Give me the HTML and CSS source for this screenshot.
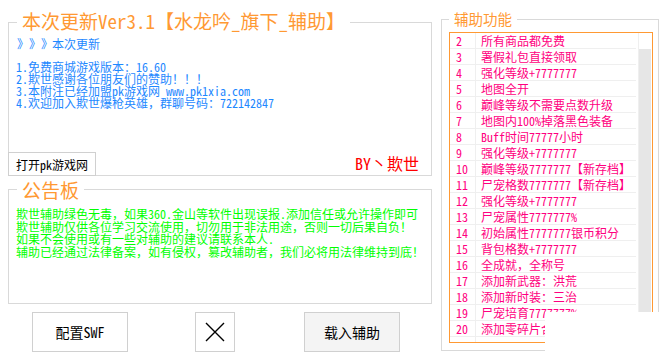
FILE: index.html
```html
<!DOCTYPE html>
<html lang="zh-CN">
<head>
  <meta charset="UTF-8" />
  <title>欺世辅助</title>
  <link rel="stylesheet" href="styles.css">
</head>
<body>
  <div class="window">
    <div class="left-col">
      <div class="group group-update">
        <span class="group-title">本次更新Ver3.1【水龙吟_旗下_辅助】</span>
        <div class="notes">
          <div><span class="chevrons">》》》</span>本次更新</div>
          <div>&nbsp;</div>
          <div>1.免费商城游戏版本：16.60</div>
          <div>2.欺世感谢各位朋友们的赞助！！！</div>
          <div>3.本附注已经加盟pk游戏网 www.pk1xia.com</div>
          <div>4.欢迎加入欺世爆枪英雄，群聊号码：722142847</div>
        </div>
        <div class="group-foot">
          <button class="btn btn-site">打开pk游戏网</button>
          <span class="author">BY丶欺世</span>
        </div>
      </div>

      <div class="group group-board">
        <span class="group-title">公告板</span>
        <div class="board">
          <div>欺世辅助绿色无毒，如果360.金山等软件出现误报.添加信任或允许操作即可</div>
          <div>欺世辅助仅供各位学习交流使用，切勿用于非法用途，否则一切后果自负！</div>
          <div>如果不会使用或有一些对辅助的建议请联系本人.</div>
          <div>辅助已经通过法律备案，如有侵权，篡改辅助者，我们必将用法律维持到底！</div>
        </div>
      </div>

      <div class="btn-row">
        <button class="btn btn-big">配置SWF</button>
        <button class="btn btn-close">
          <svg width="20" height="20" viewBox="0 0 20 20">
            <path d="M1 1 L19 19 M19 1 L1 19" stroke="#000" stroke-width="1.4" fill="none"/>
          </svg>
        </button>
        <button class="btn btn-big btn-load">载入辅助</button>
      </div>
    </div>

    <div class="group group-funcs">
      <span class="group-title">辅助功能</span>
      <div class="func-list">
        <div class="func-rows" id="func-rows"></div>
        <div class="scroll"><div class="track"><div class="thumb"></div></div></div>
      </div>
    </div>
  </div>

  <div class="glitch"></div>

  <script>
    // Feature list
    const funcs = [
      '所有商品都免费',
      '署假礼包直接领取',
      '强化等级+7777777',
      '地图全开',
      '巅峰等级不需要点数升级',
      '地图内100%掉落黑色装备',
      'Buff时间77777小时',
      '强化等级+7777777',
      '巅峰等级7777777【新存档】',
      '尸宠格数7777777【新存档】',
      '强化等级+7777777',
      '尸宠属性7777777%',
      '初始属性7777777银币积分',
      '背包格数+7777777',
      '全成就，全称号',
      '添加新武器：洪荒',
      '添加新时装：三治',
      '尸宠培育7777777%',
      '添加零碎片合成',
      ''
    ];

    const rows = document.getElementById('func-rows');

    funcs.forEach((name, i) => {
      const row = document.createElement('div');
      row.className = 'func-row';

      const no = document.createElement('span');
      no.className = 'func-no';
      no.textContent = name ? i + 2 : '';

      const label = document.createElement('span');
      label.className = 'func-name';
      label.textContent = name;

      row.appendChild(no);
      row.appendChild(label);
      rows.appendChild(row);
    });
  </script>
</body>
</html>
```

FILE: styles.css
```css
* {
  box-sizing: border-box;
  margin: 0;
  padding: 0;
}

body {
  width: 665px;
  height: 361px;
  overflow: hidden;
  position: relative;
  background: #fff;
  font-family: "Noto Sans Mono CJK SC", "Noto Sans CJK SC", sans-serif;
  font-size: 12px;
}

.window {
  display: grid;
  grid-template-columns: 424px 218px;
  column-gap: 9px;
  padding: 19px 0 0 8px;
}

.left-col {
  display: flex;
  flex-direction: column;
}

/* group boxes */
.group {
  position: relative;
  border: 1px solid #d9d9d9;
}

.group-title {
  position: absolute;
  left: 8px;
  top: -12px;
  padding: 0 5px;
  background: #fff;
  color: #ff9933;
  font-size: 19px;
  line-height: 19px;
  white-space: nowrap;
}

.group-update {
  margin-top: 3px;
  height: 154px;
  display: flex;
  flex-direction: column;
}

.notes {
  padding: 15px 0 0 7px;
  color: #1e88ff;
  line-height: 11.7px;
  white-space: nowrap;
}

.chevrons {
  display: inline-block;
  width: 36px;
  padding-left: 1px;
  letter-spacing: 6px;
}

.group-foot {
  margin: auto -1px -1px -1px;
  display: flex;
  justify-content: space-between;
  align-items: center;
}

.author {
  color: #ff0000;
  font-size: 16px;
  line-height: 16px;
  padding-right: 13px;
  margin-bottom: 3px;
}

.group-board {
  margin-top: 13px;
  height: 115px;
}

.group-board .group-title {
  top: -10px;
}

.board {
  padding: 18px 0 0 7px;
  color: #00ff00;
  line-height: 12.5px;
  white-space: nowrap;
}

/* buttons */
.btn {
  font-family: inherit;
  background: #fff;
  border: 1px solid #d0d0d0;
  color: #000;
}

.btn-site {
  width: 88px;
  height: 24px;
  font-size: 12px;
}

.btn-row {
  margin-top: 8px;
  display: flex;
  gap: 67px;
  padding-left: 24px;
}

.btn-big {
  width: 96px;
  height: 40px;
  font-size: 14px;
}

.btn-close {
  width: 40px;
  height: 40px;
  display: flex;
  align-items: center;
  justify-content: center;
}

.btn-load {
  margin-left: 2px;
  background: #f4f4f4;
}

/* feature list */
.group-funcs {
  height: 332px;
  padding: 12px 5px 7px 7px;
}

.group-funcs .group-title {
  left: 7px;
  top: -8px;
  font-size: 14.5px;
  line-height: 14.5px;
}

.func-list {
  height: 100%;
  border: 1px solid #ff9933;
  display: flex;
}

.func-rows {
  flex: 1;
  overflow: hidden;
}

.func-row {
  display: grid;
  grid-template-columns: 26px 1fr;
  height: 16px;
  border-bottom: 1px solid #efefef;
  line-height: 15px;
  color: #ff0080;
  white-space: nowrap;
}

.func-no {
  padding-left: 6px;
  border-right: 1px solid #efefef;
}

.func-name {
  padding-left: 5px;
  overflow: hidden;
}

.scroll {
  width: 16px;
  padding: 0 1px 0 2px;
}

.track {
  height: 100%;
  border-left: 1px solid #efefef;
  padding-top: 16px;
}

.thumb {
  height: 280px;
  background: #e6e6e6;
}

.glitch {
  position: absolute;
  left: 545px;
  top: 312px;
  right: 0;
  bottom: 0;
  background: #fff;
}
```
